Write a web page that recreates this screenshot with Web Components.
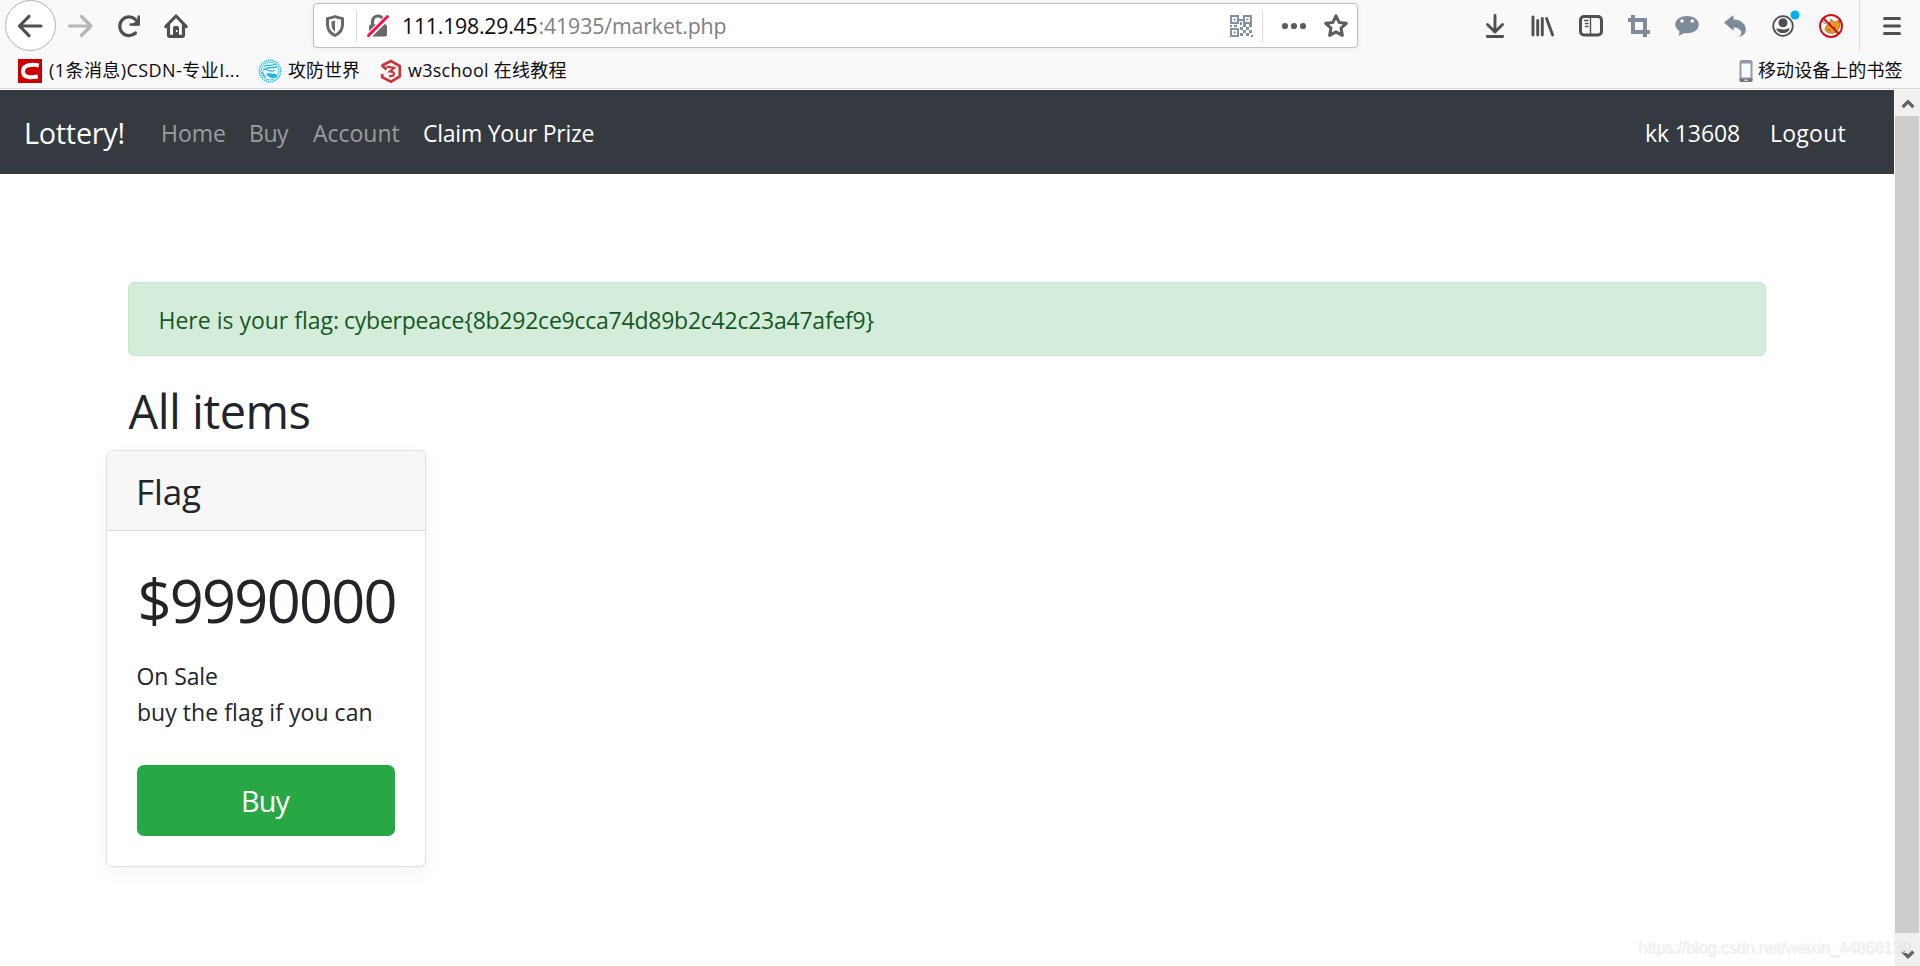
<!DOCTYPE html>
<html lang="zh-CN">
<head>
<meta charset="utf-8">
<title>Lottery!</title>
<style>
html,body{margin:0;height:100%;overflow:hidden;background:#fff}
body{font-family:"Open Sans","Noto Sans CJK SC",sans-serif}
</style>
</head>
<body>
<browser-window></browser-window>
<script>
const define=(name,html)=>customElements.define(name,class extends HTMLElement{
  constructor(){super();this.attachShadow({mode:'open'}).innerHTML=html}
});

/* One line of text: w = ink width, size = font size, base = distance from top to baseline */
const ctx=document.createElement('canvas').getContext('2d');
customElements.define('fit-line',class extends HTMLElement{
  connectedCallback(){
    if(this.shadowRoot)return;
    const a=n=>parseFloat(this.getAttribute(n));
    const size=a('size'),w=a('w'),text=this.textContent;
    const family=this.getAttribute('family')||'"Open Sans","Noto Sans CJK SC",sans-serif';
    ctx.font=`${size}px ${family}`;
    const m=ctx.measureText(text);
    const ink=m.actualBoundingBoxLeft+m.actualBoundingBoxRight;
    const gap=(w-ink)/([...text].length-1);
    const lh=2*(a('base')-(family.includes('Liberation')?.3465:.388)*size);
    this.attachShadow({mode:'open'}).innerHTML=`<style>
      :host{display:block;flex:none;width:${w}px;height:${lh}px;white-space:nowrap;font:${size}px/${lh}px ${family};font-variant-ligatures:none}
      span{display:block;margin-left:${m.actualBoundingBoxLeft}px;letter-spacing:${gap}px}
    </style><span><slot></slot></span>`;
  }
});

const S='fill="none" stroke="#505052" stroke-linecap="round" stroke-linejoin="round"';
const icons={
back:`<path ${S} stroke-width="3.2" d="M5.5 14H27M15 4.300 5.500 14l9.500 9.700"/>`,
forward:`<path ${S} style="stroke:#b6b6b7" stroke-width="3.2" d="M3.500 14H25M15.500 4.500 25 14l-9.500 9.500"/>`,
reload:`<path ${S} stroke-width="3.200" d="M21.500 7.500A9.300 9.300 0 1 0 21.500 21"/><path ${S} stroke-width="2.600" d="M24.700 4.500v8h-8"/><path fill="#505052" d="M25 6v7.500h-8z"/>`,
home:`<path ${S} stroke-width="3.200" d="M3.800 14.500 14 4l10.200 10.500M6.500 13v10q0 1.400 1.400 1.400h12.200q1.400 0 1.400-1.400V13"/><path fill="#505052" d="M11 24v-8q0-2 2-2h2q2 0 2 2v8z"/><path fill="#fff" d="M14 18h1.500v2H14z"/>`,
shield:`<path fill="none" stroke="#68686a" stroke-width="3" stroke-linejoin="round" d="M14 4.500C11 6 8.500 6.200 6.500 6.400v6.200C6.500 18 9 21.300 14 23.500c5-2.200 7.500-5.500 7.500-10.900V6.400c-2-.2-4.500-.4-7.500-1.900z"/><path fill="#68686a" d="M14 8.500c-1.500.6-2.500.8-3.500.9V13c0 3 1 5 3.500 6.700z"/>`,
lock:`<path fill="none" stroke="#68686a" stroke-width="3.200" d="M8.500 14V9.500a5.500 5.500 0 0 1 11 0V14"/><rect x="5" y="12.500" width="18" height="12" rx="2" fill="#68686a"/><path stroke="#fff" stroke-width="6" d="M4 24.500 24 4.500"/><path stroke="#ff0b44" stroke-width="2.900" stroke-linecap="round" d="M4.500 23.500 23.500 4.500"/>`,
qr:`<g fill="none" stroke="#84909e" stroke-width="2"><path d="M4 4h7v7H4zM17 4h7v7h-7zM4 17h7v7H4z"/></g><path fill="#84909e" d="M6.500 6.500h2v2h-2zm13 0h2v2h-2zm-13 13h2v2h-2zM12 7h4v2h-4zm1 3h2v3h-2zM3 13h2v2H3zm4 0h3v2H7zm6 2h3v3h-3zm3-3h3v3h-3zm3 3h3v3h-3zm3-3h3v3h-3zm-6 6h3v3h-3zm-3 3h3v3h-3zm6 0h3v3h-3zm3-3h3v3h-3zm2 5h2v2h-2z"/>`,
dots:`<g fill="#5c5c5e"><circle cx="5" cy="14" r="3.100"/><circle cx="14" cy="14" r="3.100"/><circle cx="23" cy="14" r="3.100"/></g>`,
star:`<path fill="none" stroke="#5c5c5e" stroke-width="3" stroke-linejoin="round" d="m14 3.900 3.100 6.500 7.200.9-5.300 4.900 1.400 7.200-6.400-3.500-6.400 3.500L9 16.200l-5.300-4.900 7.200-.9z"/>`,
download:`<path ${S} stroke-width="2.900" d="M14 3.500V19M6.500 12.500 14 20l7.500-7.500M6.300 24.500h15.400"/>`,
library:`<path ${S} stroke-width="2.900" d="M4 5v18M8.700 8.500V23M13.300 6.500V23M17.600 6.500 23.600 23"/>`,
sidebar:`<rect x="3.500" y="4.500" width="21" height="18.500" rx="3.500" fill="none" stroke="#505052" stroke-width="3"/><path ${S} stroke-width="1.400" d="M13.500 5v18M7.500 8.500H11M8.500 11.500H11M8.500 14.500H11"/>`,
crop:`<path fill="none" stroke="#7e8b9a" stroke-width="4" d="M8 3v17h17M3 8h17v17"/>`,
chat:`<path fill="#7e8b9a" d="M14 4c7 0 11.800 3.600 11.800 8.600S21 21.300 14 21.300c-1 0-1.800 0-2.600-.2L5.500 24l1.200-4.800C4 17.600 2.200 15.300 2.200 12.600 2.200 7.600 7 4 14 4z"/><g fill="#f9f9fa"><circle cx="9" cy="9" r="1.800"/><circle cx="19.300" cy="9" r="1.800"/></g>`,
undo:`<path fill="#7e8b9a" d="M12.500 3v4.500C20 7.500 24.800 12 24.800 17.500c0 4-2.800 6.800-7 7.200 2.200-1.700 2.800-3.400 2.300-5.200-.7-2.300-3.300-4-7.600-4V19L3 10.500z"/>`,
account:`<circle cx="14" cy="14" r="9.800" fill="none" stroke="#505052" stroke-width="1.800"/><circle cx="14" cy="10.800" r="4.500" fill="#505052"/><path fill="#505052" d="M7.500 16.200c2 .4 3 1.300 6.500 1.300s4.500-.9 6.500-1.300c0 3-3 4.800-6.500 4.800s-6.500-1.800-6.500-4.800z"/><circle cx="26" cy="3" r="4.500" fill="#00aef0"/>`,
fox:`<path fill="#f09a1c" stroke="#97611e" stroke-width=".7" d="M8 17c1-3 2-5 5-6l1-4 3 3c2 0 3-1 6-3-1 3 1 7-1 9-2 5-6 6-10 5-2-1-4-2-4-4z"/><path stroke="#666" fill="none" d="m5 9 4 3M21 11l3-2M12 10l2 3M10 17l4 2M16 16l3-1"/><circle cx="14" cy="14" r="11" fill="none" stroke="#d30d17" stroke-width="1.900"/><path stroke="#d30d17" stroke-width="2" d="m6 6 16 16"/>`,
menu:`<path ${S} stroke-width="3" d="M6.500 6.500h15M6.500 14h15M6.500 21.500h15"/>`,
csdn:`<path fill="#c90000" d="M2 2h24v24H2z"/><path fill="none" stroke="#fff" stroke-width="4" d="M22.800 8.500C17 7.300 7 7.200 7 14.500c0 7 9 6.100 14.800 5"/>`,
xctf:`<circle cx="14" cy="13" r="10.800" fill="#f3fbfe" stroke="#20b4e6" stroke-width="1.200" stroke-dasharray="1.500 .7"/><circle cx="14" cy="13" r="9" fill="none" stroke="#20b4e6" stroke-width=".8"/><path fill="none" stroke="#20b4e6" stroke-width="1.300" d="M8 8.500c4-2 7 0 12-2.500M7 12c4-3 9-2 14-3M10 11.500c3 2 6 2 9 1M6.500 13.500c0 3 1 4 3 6"/><path fill="#20b4e6" d="M10 15.500c3-1 4 .5 10 .3l1.500 2.700c-3 2.500-9 2-11.500-3z"/>`,
w3:`<path fill="none" stroke="#c9353a" stroke-width="2.700" d="m5 7.500 9-4.500 8.800 5v10.500L14 23.600l-8.800-4.500v-3M4.500 7l5 4.500"/><path fill="none" stroke="#c9353a" stroke-width="2.200" d="m9.500 8.500 7.500 1.500-4 3.500c6 0 5 5.500-1 4.500"/>`,
phone:`<rect x="7.500" y="3" width="13" height="22" rx="2.200" fill="#8f9ba8"/><path fill="#f9fafb" d="M9.500 6.500h9v14h-9z"/><path fill="#6e7985" d="M7.500 21.500h13V24q0 1-1.500 1H9q-1.500 0-1.500-1z"/><path fill="#e4e8eb" d="M12.500 22.500h3v1.500h-3z"/>`,
up:`<path fill="none" stroke="#606060" stroke-width="3.200" d="m8.700 17 5.300-5.300 5.300 5.300"/>`,
down:`<path fill="none" stroke="#606060" stroke-width="3.200" d="m8.700 11.500 5.300 5.300 5.300-5.300"/>`
};
customElements.define('ui-icon',class extends HTMLElement{
  connectedCallback(){
    if(this.shadowRoot)return;
    this.attachShadow({mode:'open'}).innerHTML=`<style>:host{display:block;flex:none;width:28px;height:28px}svg{display:block;overflow:visible}</style>
    <svg width="28" height="28" viewBox="0 0 28 28">${icons[this.getAttribute('name')]}</svg>`;
  }
});

define('url-bar',`<style>
:host{display:flex;box-sizing:border-box;width:1045px;height:45px;margin-top:3px;background:#fff;border:1px solid #bdbdbe;border-radius:4px;box-shadow:0 1px 5px rgba(0,0,0,.07);flex:none}
ui-icon{margin-top:8px}
i{flex:none;width:1px;height:32px;margin-top:6px;background:#dcdcdd}
</style>
<ui-icon name="shield" style="margin-left:7px"></ui-icon><i style="margin-left:7px"></i>
<ui-icon name="lock" style="margin-left:7px"></ui-icon>
<fit-line size="21.300" w="133.500" base="30" style="margin-left:11px;color:#0c0c0d">111.198.29.45</fit-line>
<fit-line size="21.300" w="186" base="30" style="margin-left:3px;color:#808081">:41935/market.php</fit-line>
<ui-icon name="qr" style="margin-left:501.500px"></ui-icon><i style="margin-left:7px"></i>
<ui-icon name="dots" style="margin-left:17px"></ui-icon><ui-icon name="star" style="margin-left:14px"></ui-icon>`);

define('tool-bar',`<style>
:host{display:flex;height:51px}
.b{box-sizing:border-box;width:51px;height:51px;border:1px solid #b4b4b5;border-radius:50%;background:#fff;margin-left:5px;flex:none;padding:10.500px 0 0 7.500px}
ui-icon{margin-top:12px}.b ui-icon{margin:0}
.r{display:flex;gap:20px;margin-left:123px}
i{width:1px;height:51px;background:#dcdcdd;margin-left:14px}
</style>
<div class="b"><ui-icon name="back"></ui-icon></div>
<ui-icon name="forward" style="margin-left:10px"></ui-icon>
<ui-icon name="reload" style="margin-left:20px"></ui-icon>
<ui-icon name="home" style="margin-left:20px"></ui-icon>
<url-bar style="margin-left:123px"></url-bar>
<div class="r"><ui-icon name="download"></ui-icon><ui-icon name="library"></ui-icon><ui-icon name="sidebar"></ui-icon><ui-icon name="crop"></ui-icon><ui-icon name="chat"></ui-icon><ui-icon name="undo"></ui-icon><ui-icon name="account"></ui-icon><ui-icon name="fox"></ui-icon></div>
<i></i><ui-icon name="menu" style="margin-left:18px"></ui-icon>`);

define('bookmark-bar',`<style>
:host{display:flex;height:38px;color:#0c0c0d;box-sizing:border-box;border-bottom:1px solid #d9d9da}
ui-icon{margin-top:6px}
</style>
<ui-icon name="csdn" style="margin-left:16px"></ui-icon><fit-line size="18" w="190" base="26" style="margin-left:5px">(1条消息)CSDN-专业I...</fit-line>
<ui-icon name="xctf" style="margin-left:17px;margin-top:7px"></ui-icon><fit-line size="18" w="72" base="26" style="margin-left:4px">攻防世界</fit-line>
<ui-icon name="w3" style="margin-left:17px;margin-top:7px"></ui-icon><fit-line size="18" w="158.500" base="26" style="margin-left:3px">w3school 在线教程</fit-line>
<ui-icon name="phone" style="margin-left:1165.500px"></ui-icon><fit-line size="18" w="144.500" base="26" style="margin-left:-2px">移动设备上的书签</fit-line>`);

define('site-nav',`<style>
:host{display:flex;height:84px;background:#343a40;color:#9a9da0}
.w{color:#fff}
</style>
<fit-line class="w" size="28.800" w="97.500" base="53.800" style="margin-left:26px">Lottery!</fit-line>
<fit-line size="23" w="62" base="52" style="margin-left:39.500px">Home</fit-line>
<fit-line size="23" w="38" base="52" style="margin-left:26px">Buy</fit-line>
<fit-line size="23" w="86.500" base="52" style="margin-left:24px">Account</fit-line>
<fit-line class="w" size="23" w="169.500" base="52" style="margin-left:24.500px">Claim Your Prize</fit-line>
<fit-line class="w" size="23" w="93" base="52" style="margin-left:1052.500px">kk 13608</fit-line>
<fit-line class="w" size="23" w="73.500" base="52" style="margin-left:33px">Logout</fit-line>`);

define('flash-alert',`<style>
:host{display:flex;box-sizing:border-box;width:1638px;height:74px;border:1px solid #c3e6cb;border-radius:6px;background:#d4edda;color:#155724;padding-left:31.500px}
</style><slot></slot>`);

define('item-card',`<style>
:host{display:block;box-sizing:border-box;width:320px;height:417px;border:1px solid #dfdfdf;border-radius:6px;background:#fff;box-shadow:0 6px 18px rgba(0,0,0,.05)}
header{box-sizing:border-box;height:80px;background:#f7f7f7;border-bottom:1px solid #d9d9d9;border-radius:5px 5px 0 0;padding-left:32px}
main{display:flow-root;height:234px}
</style>
<header><slot name="title"></slot></header>
<main><slot name="price"></slot><slot></slot></main>
<slot name="action"></slot>`);

define('buy-button',`<style>
:host{display:block;width:258px;height:71px;margin-left:30px;border-radius:7px;background:#28a745;color:#fff}
fit-line{margin-left:106px}
</style><fit-line size="28.800" w="47.500" base="47">Buy</fit-line>`);

define('market-page',`<style>
:host{display:flow-root;flex:none;width:1894px;height:876px;color:#212529;background:#fff}
flash-alert{margin:108px 0 0 128px}
.h{height:94px;margin-left:128.500px}
item-card{margin-left:106px}
</style>
<site-nav></site-nav>
<flash-alert><fit-line size="23" w="177.500" base="46">Here is your flag:</fit-line><fit-line size="23" w="528.500" base="46" style="margin-left:7px">cyberpeace{8b292ce9cca74d89b2c42c23a47afef9}</fit-line></flash-alert>
<div class="h"><fit-line size="47" w="181" base="73.300">All items</fit-line></div>
<item-card>
<fit-line slot="title" size="35" w="62" base="54.300">Flag</fit-line>
<fit-line slot="price" size="59.500" w="254" base="92.500" style="height:118px;margin-left:33.500px">$9990000</fit-line>
<fit-line size="23" w="79.500" base="36" style="height:36px;margin-left:30.500px">On Sale</fit-line>
<fit-line size="23" w="233.500" base="36" style="margin-left:31px">buy the flag if you can</fit-line>
<buy-button slot="action"></buy-button>
</item-card>`);

define('scroll-bar',`<style>
:host{display:flex;flex-direction:column;width:25px;height:876px;background:#f0f0f0;margin-left:1px}
ui-icon{margin-left:-1.500px}
b{width:24px;height:817px;background:#cdcdcd}
</style>
<ui-icon name="up" style="height:26px"></ui-icon><b></b><ui-icon name="down" style="margin-top:7px;height:26px"></ui-icon>`);

define('water-mark',`<style>
:host{display:block;position:absolute;left:1639px;top:936px;color:rgba(240,240,240,.85);text-shadow:1px 1px 1px rgba(0,0,0,.08)}
</style><fit-line family="'Liberation Sans',sans-serif" size="16.500" w="271" base="17">https://blog.csdn.net/weixin_44866139</fit-line>`);

define('browser-window',`<style>
:host{display:block;position:relative;width:1920px;height:966px;overflow:hidden;background:#f9f9fa}
.p{display:flex;margin-top:1px}
</style>
<tool-bar></tool-bar><bookmark-bar></bookmark-bar>
<div class="p"><market-page></market-page><scroll-bar></scroll-bar></div>
<water-mark></water-mark>`);
</script>
</body>
</html>
